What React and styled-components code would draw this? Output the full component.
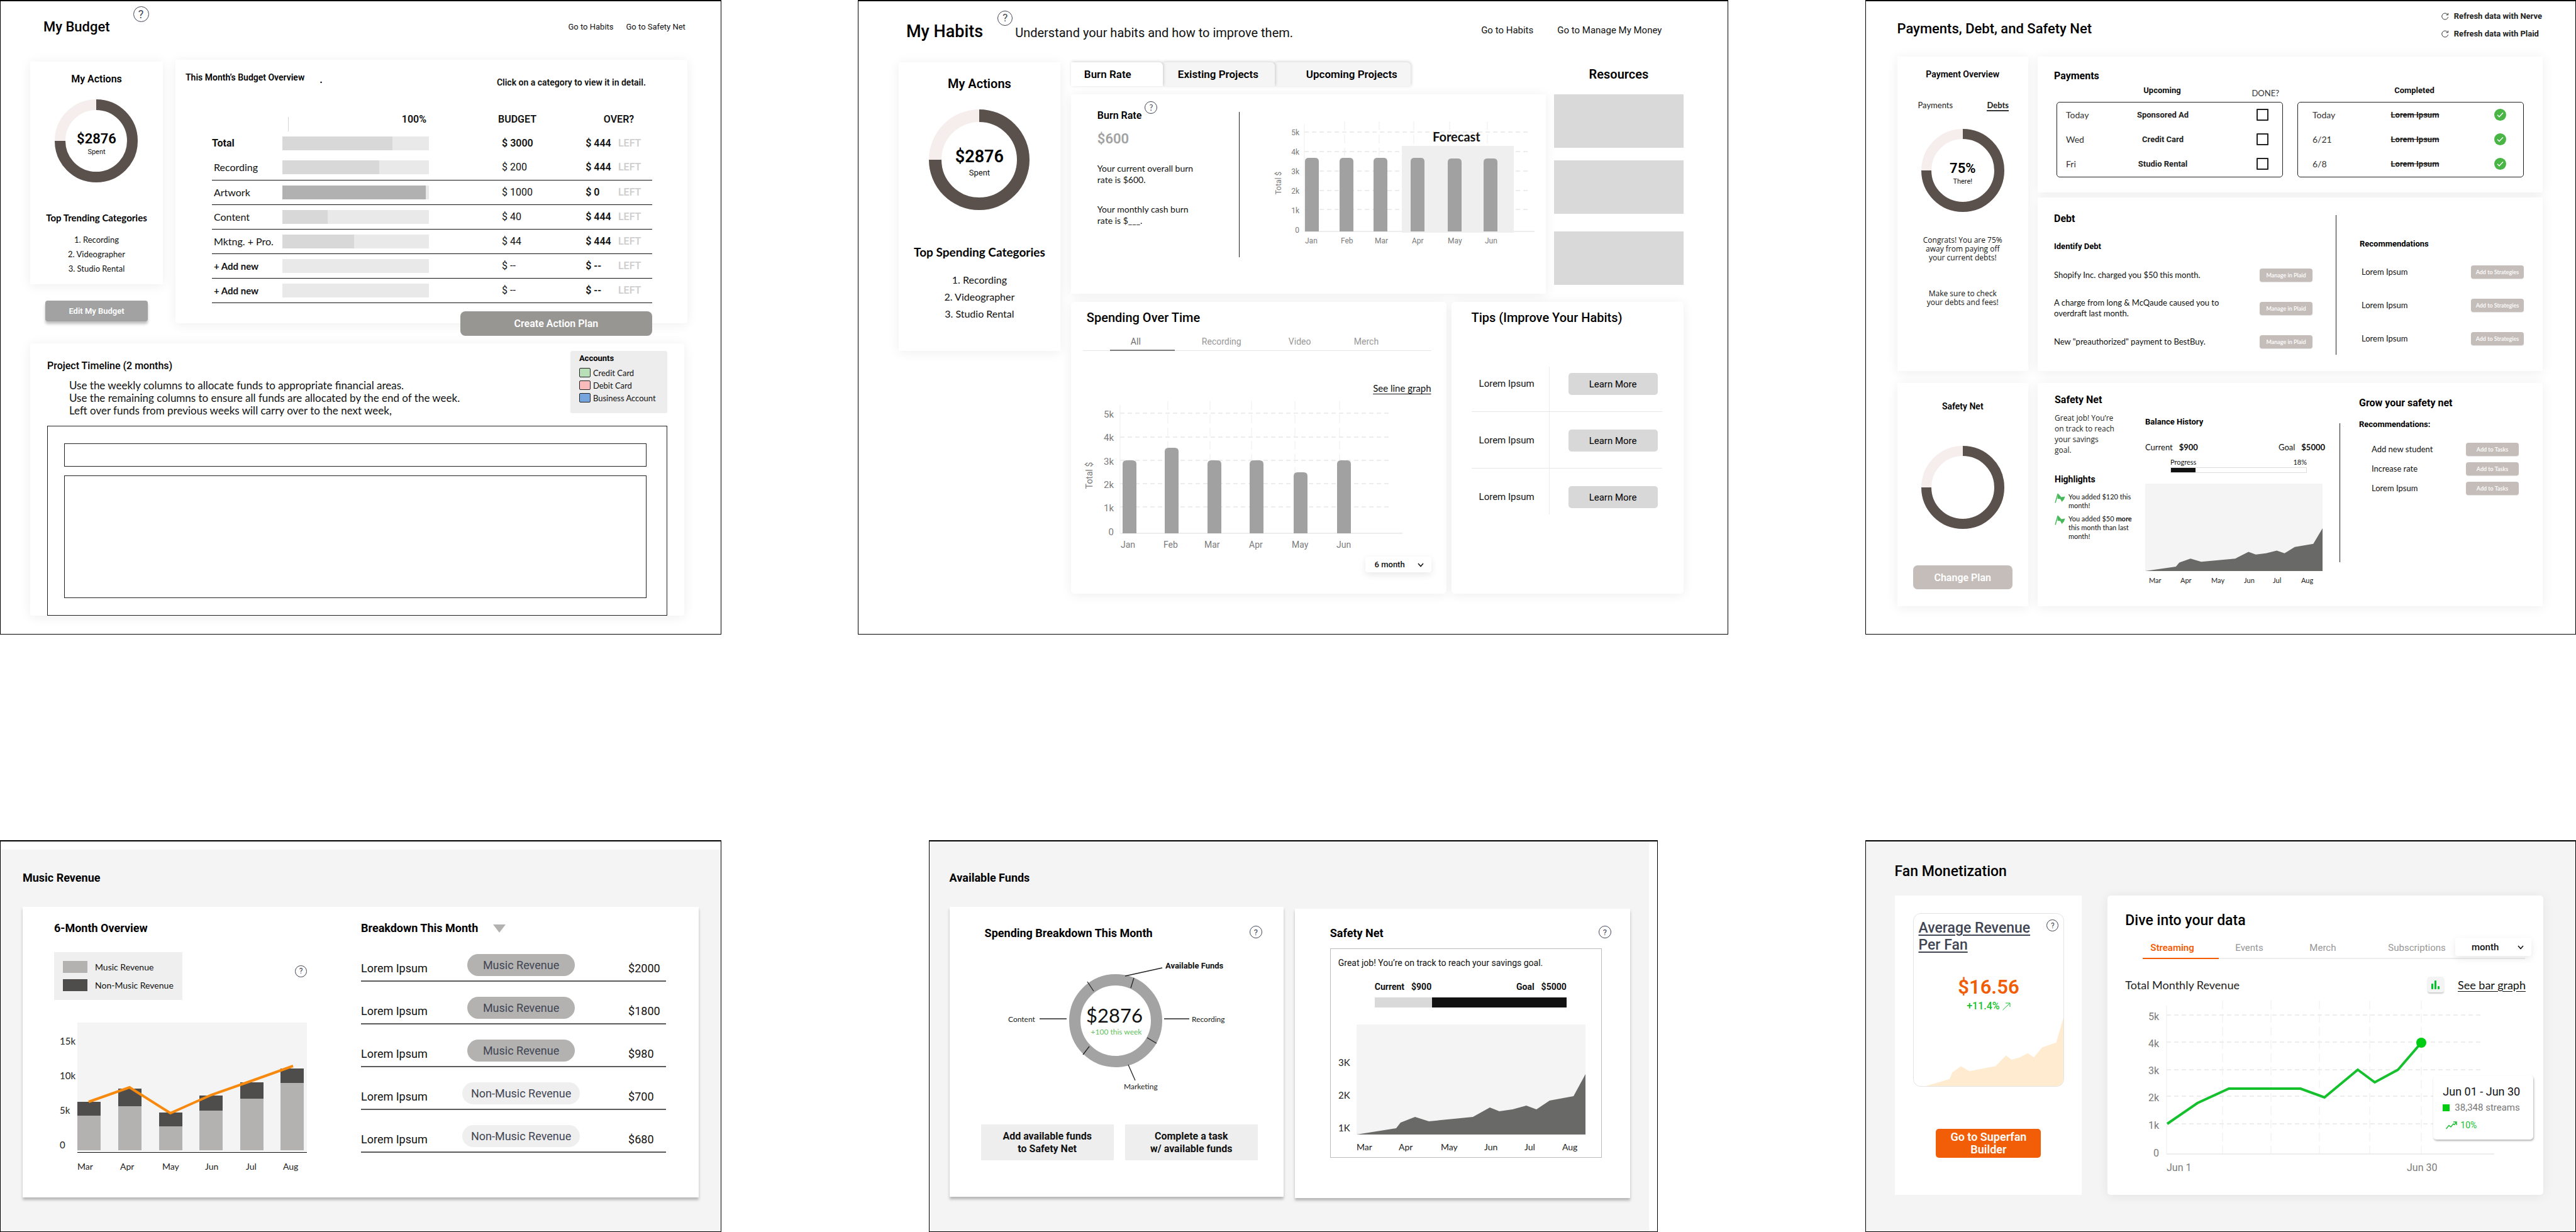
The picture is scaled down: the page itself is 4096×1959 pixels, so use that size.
import React from "react";
import styled, { createGlobalStyle, css } from "styled-components";

const roboto = '"Roboto", "Liberation Sans", sans-serif';
const lato = '"Lato", "Open Sans", sans-serif';
const openSans = '"Open Sans", "Noto Sans", sans-serif';

const GlobalStyle = createGlobalStyle`
  *, *::before, *::after { box-sizing: border-box; }
  body { margin: 0; background: #fff; color: #111; font-family: ${roboto}; }
  h1, h2, h3, h4, p, ul, ol, dl, dd { margin: 0; padding: 0; }
  ul, ol { list-style: none; }
  button, select, input { font-family: inherit; margin: 0; }
  button { cursor: pointer; padding: 0; border: 0; background: none; color: inherit; }
  svg { display: block; }
`;

/* ---------- Board ---------- */

const Board = styled.main`
  display: flex;
  flex-direction: column;
  justify-content: space-between;
  gap: 64px;
  min-height: 100vh;
`;

const BoardRow = styled.div`
  display: flex;
  justify-content: space-between;
  align-items: stretch;
`;

const Frame = styled.section`
  width: ${(p) => p.$width};
  border: 1px solid #000;
  border-top-width: 2px;
  background: ${(p) => (p.$tinted ? "#f4f4f4" : "#fff")};
`;

/* ---------- Text ---------- */

const PageTitle = styled.h1`
  font-size: ${(p) => p.$size || 22}px;
  line-height: 28px;
  font-weight: 500;
  color: #000;
  white-space: nowrap;
`;

const Heading = styled.h2`
  font-family: ${(p) => (p.$round ? lato : roboto)};
  font-size: ${(p) => p.$size || 16}px;
  line-height: ${(p) => p.$line || 20}px;
  font-weight: ${(p) => p.$weight || 500};
  color: #000;
  text-align: ${(p) => (p.$center ? "center" : "left")};
  margin-top: ${(p) => p.$top || 0}px;
  white-space: nowrap;
`;

const NavLink = styled.a`
  font-size: ${(p) => p.$size || 13}px;
  line-height: 20px;
  color: #111;
  text-decoration: none;
  white-space: nowrap;
`;

const UnderlinedLink = styled.a`
  font-family: ${lato};
  font-size: ${(p) => p.$size}px;
  line-height: 20px;
  color: #111;
  text-decoration: underline;
  text-underline-offset: 3px;
`;

const HelpButton = styled.button`
  flex: none;
  width: ${(p) => p.$size}px;
  height: ${(p) => p.$size}px;
  border: 1px solid #3f4553;
  border-radius: 50%;
  color: #3f4553;
  font-size: ${(p) => p.$size - 7}px;
  line-height: 1;
`;

const Help = ({ size = 20, className }) => (
  <HelpButton type="button" $size={size} className={className}>?</HelpButton>
);

/* ---------- Cards ---------- */

const Card = styled.article`
  background: #fff;
  border-radius: ${(p) => p.$radius || 0}px;
  box-shadow: 0 2px 18px rgba(0, 0, 0, 0.07);
`;

const RaisedCard = styled.article`
  background: #fff;
  box-shadow: 0 4px 4px rgba(0, 0, 0, 0.25);
`;

/* ---------- Donut ---------- */

const DonutBox = styled.div`
  display: grid;
  place-items: center;
  margin-top: ${(p) => p.$top}px;
  > * { grid-area: 1 / 1; }
`;

const DonutLabel = styled.div`
  padding-top: 12px;
  text-align: center;
`;

const DonutValue = styled.div`
  font-size: ${(p) => (p.$big ? 27 : 22)}px;
  line-height: ${(p) => (p.$big ? 30 : 24)}px;
  font-weight: 600;
  color: #000;
`;

const DonutCaption = styled.div`
  font-size: ${(p) => (p.$big ? 13 : 11)}px;
  line-height: ${(p) => (p.$big ? 22 : 18)}px;
`;

const Donut = ({ size, thickness, top, value, caption, big }) => {
  const r = (size - thickness) / 2;
  const ring = { cx: size / 2, cy: size / 2, r, fill: "none", strokeWidth: thickness };
  return (
    <DonutBox $top={top}>
      <svg width={size} height={size}>
        <circle {...ring} stroke="#f6eeec" />
        <circle
          {...ring}
          stroke="#5a514d"
          pathLength="100"
          strokeDasharray="75 25"
          transform={`rotate(-90 ${size / 2} ${size / 2})`}
        />
      </svg>
      {value && (
        <DonutLabel>
          <DonutValue $big={big}>{value}</DonutValue>
          <DonutCaption $big={big}>{caption}</DonutCaption>
        </DonutLabel>
      )}
    </DonutBox>
  );
};

const RankedList = styled.ol`
  margin-top: ${(p) => p.$top}px;
  font-family: ${lato};
  font-size: ${(p) => p.$size}px;
  line-height: ${(p) => p.$line}px;
  text-align: center;
`;

/* ---------- Chart pieces ---------- */

const ChartText = styled.text`
  font-family: ${(p) => (p.$round ? lato : roboto)};
  font-size: ${(p) => p.$size}px;
  font-weight: ${(p) => p.$weight || 400};
  fill: ${(p) => p.$color || "#7b7b7b"};
  dominant-baseline: central;
`;

const AREA =
  "0,96 63,86 70,77 93,68 115,75 185,68 212,53 227,59 248,56 270,50 286,56 307,42 345,35 364,0 364,96";

const Area = ({ x = 0, y = 0, width, height, fill }) => (
  <svg x={x} y={y} width={width} height={height} viewBox="0 0 364 96" preserveAspectRatio="none">
    <polygon points={AREA} fill={fill} />
  </svg>
);

const PlotGrid = ({ plot }) => (
  <g stroke="#ededed">
    {plot.rows.map((y) => (
      <line key={y} x1={plot.left} x2={plot.gridRight} y1={y} y2={y} strokeWidth="2" strokeDasharray="7 5" />
    ))}
    {plot.columns.map((x) => (
      <line key={x} x1={x} x2={x} y1={plot.columnTop} y2={plot.base} strokeDasharray="14 7" />
    ))}
    <line x1={plot.left} x2={plot.left} y1={plot.top} y2={plot.base} />
    <line x1={plot.left} x2={plot.right} y1={plot.base} y2={plot.base} strokeWidth="2" />
  </g>
);

const PlotScale = ({ plot }) =>
  ["5k", "4k", "3k", "2k", "1k", "0"].map((label, i) => (
    <ChartText key={label} x={plot.labelRight} y={plot.labels[i]} textAnchor="end" $size={plot.scaleSize}>
      {label}
    </ChartText>
  ));

const BarChart = ({ plot, children }) => (
  <svg width={plot.width} height={plot.height}>
    <PlotGrid plot={plot} />
    {children}
    <PlotScale plot={plot} />
    <ChartText
      x="0"
      y="0"
      textAnchor="middle"
      $size={plot.monthSize}
      transform={`translate(${plot.titleX} ${plot.titleY}) rotate(-90)`}
    >
      Total $
    </ChartText>
    {plot.bars.map((bar) => (
      <g key={bar.month}>
        <path
          fill="#a1a1a1"
          d={`M${bar.x} ${plot.base} V${bar.top + 6} q0 -6 6 -6 h10 q6 0 6 6 V${plot.base} z`}
        />
        <ChartText x={bar.labelX} y={plot.monthY} $size={plot.monthSize}>
          {bar.month}
        </ChartText>
      </g>
    ))}
  </svg>
);

/* ---------- Buttons, selects ---------- */

const SoftButton = styled.button`
  width: ${(p) => p.$width}px;
  height: 21px;
  border-radius: 4px;
  background: #c5bdb9;
  color: #fff;
  font-size: 9px;
  font-weight: 600;
  box-shadow: 0 1px 1px rgba(0, 0, 0, 0.12);
`;

const SelectBox = styled.div`
  position: relative;
  width: ${(p) => p.$width}px;
  height: ${(p) => p.$height}px;
  svg { position: absolute; right: 12px; top: 50%; margin-top: -3px; pointer-events: none; }
`;

const SelectField = styled.select`
  appearance: none;
  width: 100%;
  height: 100%;
  border: 0;
  border-radius: 4px;
  padding: 0 0 0 ${(p) => p.$indent}px;
  background: #fff;
  color: #111;
  font-size: ${(p) => p.$size}px;
  font-weight: 500;
  box-shadow: 0 4px 12px rgba(0, 0, 0, 0.09);
`;

const Select = ({ label, width, height, size, indent }) => (
  <SelectBox $width={width} $height={height}>
    <SelectField aria-label="Period" $size={size} $indent={indent}>
      <option>{label}</option>
    </SelectField>
    <svg width="10" height="7" viewBox="0 0 10 7" fill="none" stroke="#111" strokeWidth="1.5">
      <path d="M1 1 L5 5.5 L9 1" />
    </svg>
  </SelectBox>
);

/* ---------- My Budget ---------- */

const BudgetHeader = styled.header`
  display: flex;
  align-items: center;
  height: 82px;
  padding: 0 56px 0 68px;
  ${HelpButton} { align-self: flex-start; margin: 8px auto 0 37px; }
  nav { display: flex; gap: 20px; }
`;

const BudgetBody = styled.div`
  display: grid;
  grid-template-columns: 211fr 814fr;
  column-gap: 20px;
  padding: 11px 53px 29px 47px;
`;

const BudgetSide = styled.div`
  display: flex;
  flex-direction: column;
  align-items: center;
  padding-top: 3px;
`;

const ActionsCard = styled(Card)`
  width: 100%;
  padding: 18px 0 13px;
`;

const EditButton = styled.button`
  width: 163px;
  height: 33px;
  margin-top: 26px;
  border-radius: 4px;
  background: #a2a2a2;
  color: #fff;
  font-size: 13px;
  font-weight: 600;
  box-shadow: 0 4px 4px rgba(0, 0, 0, 0.25);
`;

const OverviewCard = styled(Card)`
  position: relative;
  padding: 18px 0 32px;
`;

const OverviewTop = styled.div`
  display: flex;
  height: 28px;
  padding: 0 66px 0 16px;
`;

const OverviewHint = styled.p`
  align-self: flex-end;
  margin-left: auto;
  font-size: 14px;
  line-height: 20px;
  font-weight: 600;
`;

const OverviewDot = styled.span`
  align-self: center;
  margin-left: 24px;
  font-weight: 700;
  line-height: 20px;
`;

const BudgetTable = styled.table`
  width: calc(100% - 114px);
  margin: 30px 56px 0 58px;
  table-layout: fixed;
  border-collapse: collapse;
  font-size: 16px;
  line-height: 20px;
  th, td { padding: 0; text-align: left; font-weight: 400; white-space: nowrap; }
  thead tr, tbody tr:first-child { height: 38px; }
  thead th { font-weight: 600; }
  tbody tr { height: 39px; }
  tbody tr + tr { border-bottom: 1px solid #111; }
  thead th:nth-child(3) { padding-left: 110px; }
  thead th:last-child { text-align: center; }
`;

const CategoryCell = styled.th`
  && {
    padding-left: ${(p) => (p.$kind === "total" ? 0 : 3)}px;
    font-family: ${(p) => (p.$kind === "total" ? roboto : lato)};
    font-size: ${(p) => (p.$kind === "new" ? 15 : 16)}px;
    font-weight: ${(p) => (p.$kind ? 700 : 400)};
  }
`;

const PlannedCell = styled.td`
  && { padding-left: 116px; font-weight: ${(p) => (p.$strong ? 600 : 400)}; }
`;

const OverCell = styled.td`
  && { font-weight: 600; }
`;

const LeftCell = styled.td`
  && { font-weight: 600; color: #d0cfcf; }
`;

const ScaleHead = styled.div`
  display: flex;
  justify-content: space-between;
  height: 38px;
  padding: 0 4px 0 9px;
  line-height: 38px;
  &::before { content: ""; align-self: flex-end; width: 1px; height: 23px; background: #d4d4d4; }
`;

const Meter = styled.div`
  height: 22px;
  background: #e9e9e9;
`;

const MeterFill = styled.div`
  height: 100%;
  background: ${(p) => (p.$full ? "#b1b1b1" : "#d8d8d8")};
`;

const PlanButton = styled.button`
  position: absolute;
  right: 56px;
  bottom: -20px;
  width: 305px;
  height: 39px;
  border-radius: 8px;
  background: #989693;
  color: #fff;
  font-size: 16px;
  font-weight: 600;
`;

const TimelineCard = styled(Card)`
  grid-column: 1 / -1;
  margin: 32px 5px 0 0;
  padding: 12px 27px 0;
`;

const TimelineTop = styled.div`
  display: flex;
  justify-content: space-between;
`;

const TimelineCopy = styled.div`
  margin: 11px 0 0 35px;
  font-family: ${lato};
  font-size: 17px;
  line-height: 20px;
`;

const AccountsLegend = styled.div`
  width: 154px;
  height: 99px;
  padding: 4px 0 0 14px;
  border-radius: 3px;
  background: #ededed;
`;

const LegendList = styled.ul`
  margin-top: 5px;
  font-family: ${lato};
  font-size: 13px;
  line-height: 20px;
  li { display: flex; align-items: center; gap: 4px; }
`;

const AccountSwatch = styled.span`
  width: 18px;
  height: 15px;
  border: 1px solid #222;
  border-radius: 2px;
  background: ${(p) => p.$color};
`;

const TimelineBox = styled.div`
  display: flex;
  flex-direction: column;
  gap: 14px;
  margin-top: 14px;
  padding: 27px 32px 27px 26px;
  border: 1px solid #222;
`;

const TimelineLane = styled.div`
  height: ${(p) => p.$height}px;
  border: 1px solid #222;
`;

const budgetRows = [
  { name: "Total", kind: "total", fill: 75, planned: "$ 3000", over: "$ 444" },
  { name: "Recording", fill: 66, planned: "$ 200", over: "$ 444" },
  { name: "Artwork", fill: 98, full: true, planned: "$ 1000", over: "$ 0" },
  { name: "Content", fill: 31, planned: "$ 40", over: "$ 444" },
  { name: "Mktng. + Pro.", fill: 49, planned: "$ 44", over: "$ 444" },
  { name: "+ Add new", kind: "new", fill: 0, planned: "$ --", over: "$ --" },
  { name: "+ Add new", kind: "new", fill: 0, planned: "$ --", over: "$ --" },
];

const MyBudget = () => (
  <Frame $width="28%">
    <BudgetHeader>
      <PageTitle>My Budget</PageTitle>
      <Help size={25} />
      <nav>
        <NavLink href="#habits">Go to Habits</NavLink>
        <NavLink href="#safety-net">Go to Safety Net</NavLink>
      </nav>
    </BudgetHeader>
    <BudgetBody>
      <BudgetSide>
        <ActionsCard>
          <Heading $center $weight={600}>My Actions</Heading>
          <Donut size={132} thickness={17} top={22} value="$2876" caption="Spent" />
          <Heading as="h3" $round $center $size={15} $weight={700} $top={46}>Top Trending Categories</Heading>
          <RankedList $top={14} $size={13} $line={23}>
            <li>1. Recording</li>
            <li>2. Videographer</li>
            <li>3. Studio Rental</li>
          </RankedList>
        </ActionsCard>
        <EditButton type="button">Edit My Budget</EditButton>
      </BudgetSide>
      <OverviewCard $radius={4}>
        <OverviewTop>
          <Heading $size={14} $weight={600}>This Month’s Budget Overview</Heading>
          <OverviewDot>.</OverviewDot>
          <OverviewHint>Click on a category to view it in detail.</OverviewHint>
        </OverviewTop>
        <BudgetTable>
          <colgroup>
            <col style={{ width: "16%" }} />
            <col style={{ width: "33.3%" }} />
            <col style={{ width: "35.6%" }} />
            <col style={{ width: "7.4%" }} />
            <col style={{ width: "7.7%" }} />
          </colgroup>
          <thead>
            <tr>
              <th />
              <th><ScaleHead>100%</ScaleHead></th>
              <th>BUDGET</th>
              <th colSpan="2">OVER?</th>
            </tr>
          </thead>
          <tbody>
            {budgetRows.map((row, i) => (
              <tr key={i}>
                <CategoryCell $kind={row.kind}>{row.name}</CategoryCell>
                <td><Meter><MeterFill $full={row.full} style={{ width: `${row.fill}%` }} /></Meter></td>
                <PlannedCell $strong={row.kind === "total"}>{row.planned}</PlannedCell>
                <OverCell>{row.over}</OverCell>
                <LeftCell>LEFT</LeftCell>
              </tr>
            ))}
          </tbody>
        </BudgetTable>
        <PlanButton type="button">Create Action Plan</PlanButton>
      </OverviewCard>
      <TimelineCard $radius={4}>
        <TimelineTop>
          <div>
            <Heading $top={14}>Project Timeline (2 months)</Heading>
            <TimelineCopy>
              <p>Use the weekly columns to allocate funds to appropriate financial areas.</p>
              <p>Use the remaining columns to ensure all funds are allocated by the end of the week.</p>
              <p>Left over funds from previous weeks will carry over to the next week,</p>
            </TimelineCopy>
          </div>
          <AccountsLegend>
            <Heading as="h3" $size={13} $line={16} $weight={700}>Accounts</Heading>
            <LegendList>
              <li><AccountSwatch $color="#b9dfb9" />Credit Card</li>
              <li><AccountSwatch $color="#f9bcbc" />Debit Card</li>
              <li><AccountSwatch $color="#76a5dd" />Business Account</li>
            </LegendList>
          </AccountsLegend>
        </TimelineTop>
        <TimelineBox>
          <TimelineLane $height={37} />
          <TimelineLane $height={195} />
        </TimelineBox>
      </TimelineCard>
    </BudgetBody>
  </Frame>
);

/* ---------- My Habits ---------- */

const HabitsHeader = styled.header`
  display: flex;
  align-items: center;
  justify-content: space-between;
  height: 97px;
  padding: 0 105px 0 76px;
  nav { display: flex; gap: 38px; padding-bottom: 6px; }
`;

const HabitsTitle = styled.div`
  display: flex;
  align-items: baseline;
  p { font-size: 20px; line-height: 28px; margin-left: 4px; }
  ${HelpButton} { align-self: flex-start; margin: -19px 0 0 23px; }
`;

const HabitsBody = styled.div`
  display: grid;
  grid-template-columns: 257fr 975fr;
  column-gap: 17px;
  align-items: start;
  padding: 0 70px 63px 64px;
`;

const HabitsActions = styled(Card)`
  padding: 22px 0 46px;
`;

const HabitsMain = styled.div`
  display: grid;
  gap: 13px;
`;

const BurnRow = styled.div`
  display: grid;
  grid-template-columns: 755fr 207fr;
  column-gap: 13px;
`;

const ProjectTabs = styled.div`
  display: flex;
  height: 38px;
  margin-bottom: 13px;
`;

const ProjectTab = styled.button`
  position: relative;
  z-index: ${(p) => p.$layer};
  width: ${(p) => p.$width}px;
  padding-left: ${(p) => p.$indent}px;
  border-radius: 0 6px 0 0;
  background: ${(p) => (p.$active ? "#fff" : "#f5f5f5")};
  box-shadow: 1px -1px 5px rgba(0, 0, 0, 0.18);
  font-size: 17px;
  font-weight: 600;
  color: #000;
  text-align: left;
  white-space: nowrap;
`;

const BurnCard = styled(Card)`
  display: flex;
  padding: 11px 0 58px 42px;
`;

const BurnCopy = styled.div`
  width: 225px;
  font-family: ${lato};
  font-size: 14px;
  line-height: 18px;
  p { max-width: 170px; }
  p + p { margin-top: 29px; }
`;

const BurnTitle = styled.div`
  display: flex;
  gap: 5px;
  height: 33px;
  ${Heading} { align-self: flex-end; }
`;

const BurnValue = styled.div`
  margin: 14px 0 25px;
  font-family: ${roboto};
  font-size: 22px;
  line-height: 26px;
  font-weight: 600;
  color: #a2a2a2;
`;

const Divider = styled.div`
  flex: none;
  width: 1px;
  height: ${(p) => p.$height}px;
  margin: ${(p) => p.$top}px 0 0 ${(p) => p.$left || 0}px;
  background: #222;
`;

const BurnChart = styled.div`
  margin: 19px 0 0 49px;
`;

const Resources = styled.div`
  display: grid;
  align-content: start;
  row-gap: 20px;
  ${Heading} { margin-bottom: -7px; }
`;

const ResourceTile = styled.div`
  height: 85px;
  background: #d9d9d9;
  &:last-child { margin-top: 8px; }
`;

const SpendingRow = styled.div`
  display: grid;
  grid-template-columns: 597fr 370fr;
  column-gap: 8px;
`;

const SpendingCard = styled(Card)`
  display: flex;
  flex-direction: column;
  align-items: flex-end;
  padding: 13px 24px 34px 19px;
  > ${Heading} { align-self: flex-start; padding-left: 6px; }
  > ${UnderlinedLink} { margin-top: 49px; }
  > svg { align-self: flex-start; margin: 9px 0 7px; }
`;

const FilterTabs = styled.div`
  display: flex;
  align-self: stretch;
  height: 28px;
  margin-top: 13px;
  padding-left: 43px;
  border-bottom: 1px solid #e6e6e6;
`;

const FilterTab = styled.button`
  width: ${(p) => p.$width}px;
  height: 28px;
  padding-left: ${(p) => (p.$active ? 33 : 43)}px;
  border-bottom: 2px solid ${(p) => (p.$active ? "#7c7c7c" : "transparent")};
  color: ${(p) => (p.$active ? "#6d6d6d" : "#979797")};
  font-size: 14px;
  text-align: left;
`;

const TipsCard = styled(Card)`
  padding: 13px 34px 0 32px;
`;

const TipsList = styled.ul`
  margin-top: 66px;
  li { display: grid; grid-template-columns: 123px 1fr; }
  li + li { border-top: 1px solid #e6e6e6; }
`;

const TipText = styled.span`
  padding: 28px 0 26px 12px;
  font-size: 15px;
  line-height: 35px;
  li:first-child & { padding-top: 10px; }
  li:last-child & { padding-bottom: 10px; }
`;

const TipAction = styled.span`
  padding: 28px 0 26px 30px;
  border-left: 1px solid #ececec;
  li:first-child & { padding-top: 10px; }
  li:last-child & { padding-bottom: 10px; }
`;

const LearnButton = styled.button`
  display: block;
  width: 142px;
  height: 35px;
  border-radius: 5px;
  background: #d8d8d8;
  font-size: 15px;
  color: #000;
`;

const burnPlot = {
  width: 430, height: 220, left: 54, top: 18, base: 188, right: 420, gridRight: 414,
  rows: [30, 61, 92, 123, 153], columns: [118, 173, 228, 285, 345], columnTop: 13,
  labels: [31, 62, 93, 124, 155, 186], labelRight: 46, scaleSize: 12,
  monthY: 203, monthSize: 12, titleX: 13, titleY: 111,
  bars: [
    { month: "Jan", x: 55, top: 71, labelX: 55 },
    { month: "Feb", x: 110, top: 71, labelX: 112 },
    { month: "Mar", x: 164, top: 71, labelX: 166 },
    { month: "Apr", x: 223, top: 71, labelX: 225 },
    { month: "May", x: 282, top: 72, labelX: 282 },
    { month: "Jun", x: 339, top: 72, labelX: 341 },
  ],
};

const spendingPlot = {
  width: 520, height: 242, left: 59, top: 8, base: 212, right: 508, gridRight: 491,
  rows: [21, 59, 96, 133, 170], columns: [135, 202, 268, 337, 408], columnTop: 2,
  labels: [23, 60, 98, 135, 172, 210], labelRight: 49, scaleSize: 15,
  monthY: 230, monthSize: 14, titleX: 10, titleY: 120,
  bars: [
    { month: "Jan", x: 63, top: 96, labelX: 60 },
    { month: "Feb", x: 130, top: 76, labelX: 128 },
    { month: "Mar", x: 198, top: 96, labelX: 193 },
    { month: "Apr", x: 265, top: 96, labelX: 264 },
    { month: "May", x: 335, top: 115, labelX: 332 },
    { month: "Jun", x: 404, top: 96, labelX: 403 },
  ],
};

const MyHabits = () => (
  <Frame $width="33.8%">
    <HabitsHeader>
      <HabitsTitle>
        <PageTitle $size={27}>My Habits</PageTitle>
        <Help size={24} />
        <p>Understand your habits and how to improve them.</p>
      </HabitsTitle>
      <nav>
        <NavLink $size={15} href="#habits">Go to Habits</NavLink>
        <NavLink $size={15} href="#money">Go to Manage My Money</NavLink>
      </nav>
    </HabitsHeader>
    <HabitsBody>
      <HabitsActions>
        <Heading $center $size={20} $line={24} $weight={600}>My Actions</Heading>
        <Donut size={160} thickness={20} top={29} value="$2876" caption="Spent" big />
        <Heading as="h3" $round $center $size={19} $line={24} $weight={700} $top={55}>Top Spending Categories</Heading>
        <RankedList $top={18} $size={16} $line={27}>
          <li>1. Recording</li>
          <li>2. Videographer</li>
          <li>3. Studio Rental</li>
        </RankedList>
      </HabitsActions>
      <HabitsMain>
        <BurnRow>
          <div>
            <ProjectTabs>
              <ProjectTab type="button" $active $layer={3} $width={146} $indent={21}>Burn Rate</ProjectTab>
              <ProjectTab type="button" $layer={2} $width={178} $indent={24}>Existing Projects</ProjectTab>
              <ProjectTab type="button" $layer={1} $width={216} $indent={50}>Upcoming Projects</ProjectTab>
            </ProjectTabs>
            <BurnCard>
              <BurnCopy>
                <BurnTitle>
                  <Heading $weight={600}>Burn Rate</Heading>
                  <Help size={20} />
                </BurnTitle>
                <BurnValue>$600</BurnValue>
                <p>Your current overall burn rate is $600.</p>
                <p>Your monthly cash burn rate is $___.</p>
              </BurnCopy>
              <Divider $height={231} $top={17} />
              <BurnChart>
                <BarChart plot={burnPlot}>
                  <rect x="209" y="52" width="178" height="138" fill="#efefef" />
                  <ChartText x="258" y="37" $round $size={20} $weight={700} $color="#111">Forecast</ChartText>
                </BarChart>
              </BurnChart>
            </BurnCard>
          </div>
          <Resources>
            <Heading $center $size={20} $line={38} $weight={600}>Resources</Heading>
            <ResourceTile />
            <ResourceTile />
            <ResourceTile />
          </Resources>
        </BurnRow>
        <SpendingRow>
          <SpendingCard $radius={5}>
            <Heading $size={20} $line={24}>Spending Over Time</Heading>
            <FilterTabs>
              <FilterTab type="button" $active $width={103}>All</FilterTab>
              <FilterTab type="button" $width={138}>Recording</FilterTab>
              <FilterTab type="button" $width={104}>Video</FilterTab>
              <FilterTab type="button" $width={104}>Merch</FilterTab>
            </FilterTabs>
            <UnderlinedLink $size={15} href="#line-graph">See line graph</UnderlinedLink>
            <BarChart plot={spendingPlot} />
            <Select label="6 month" width={105} height={25} size={13} indent={15} />
          </SpendingCard>
          <TipsCard $radius={5}>
            <Heading $size={20} $line={24}>Tips (Improve Your Habits)</Heading>
            <TipsList>
              {[1, 2, 3].map((n) => (
                <li key={n}>
                  <TipText>Lorem Ipsum</TipText>
                  <TipAction><LearnButton type="button">Learn More</LearnButton></TipAction>
                </li>
              ))}
            </TipsList>
          </TipsCard>
        </SpendingRow>
      </HabitsMain>
    </HabitsBody>
  </Frame>
);

/* ---------- Payments, Debt, and Safety Net ---------- */

const PaymentsHeader = styled.header`
  display: flex;
  align-items: center;
  justify-content: space-between;
  height: 88px;
  padding: 0 53px 0 50px;
`;

const RefreshList = styled.div`
  align-self: flex-start;
  padding-top: 10px;
`;

const RefreshButton = styled.button`
  display: flex;
  align-items: center;
  gap: 8px;
  font-size: 13px;
  line-height: 28px;
  font-weight: 700;
  color: #222;
`;

const RefreshIcon = () => (
  <svg width="12" height="12" viewBox="0 0 12 12" fill="none" stroke="#333" strokeWidth="1">
    <path d="M10.6 7.2 A5 5 0 1 1 9.4 2.6 L10.4 3.6" />
    <path d="M10.6 0.8 V3.8 H7.6" />
  </svg>
);

const PaymentsBody = styled.div`
  display: grid;
  grid-template-columns: 208fr 801fr;
  gap: 19px 15px;
  padding: 0 52px 43px 50px;
`;

const PaymentOverview = styled(Card)`
  padding: 18px 0 102px;
`;

const OverviewTabs = styled.div`
  display: flex;
  justify-content: space-between;
  margin-top: 31px;
  padding: 0 31px 0 33px;
`;

const OverviewTab = styled.button`
  height: 18px;
  border-bottom: 2px solid ${(p) => (p.$active ? "#333" : "transparent")};
  font-family: ${lato};
  font-size: 13px;
  line-height: 16px;
  font-weight: ${(p) => (p.$active ? 700 : 400)};
  color: #222;
`;

const OverviewNote = styled.p`
  width: 132px;
  margin: ${(p) => p.$top}px auto 0;
  font-family: ${openSans};
  font-size: 12px;
  line-height: 14px;
  text-align: center;
`;

const MainStack = styled.div`
  display: grid;
  row-gap: 8px;
`;

const PaymentsCard = styled(Card)`
  padding: 21px 30px 22px;
  > ${Heading} { margin-left: -4px; }
`;

const PaymentsColumns = styled.div`
  display: grid;
  grid-template-columns: 1fr 1fr;
  column-gap: 23px;
`;

const columnTemplate = css`
  display: grid;
  grid-template-columns: ${(p) => 84 + p.$shift}px 168px 1fr;
  align-items: center;
`;

const ColumnHead = styled.div`
  ${columnTemplate}
  height: 31px;
  padding-bottom: 6px;
  font-size: 13px;
  line-height: 16px;
  font-weight: 700;
  text-align: center;
  > :first-child { grid-column: 2; }
`;

const DoneLabel = styled.span`
  align-self: end;
  justify-self: end;
  padding-right: 6px;
  font-family: ${lato};
  font-weight: 400;
  color: #333;
`;

const PaymentList = styled.ul`
  height: 120px;
  border: 1px solid #222;
  border-radius: 5px;
`;

const PaymentItem = styled.li`
  ${columnTemplate}
  height: 39px;
  font-size: 13px;
`;

const PaymentDay = styled.span`
  padding-left: ${(p) => 14 + p.$inset}px;
  font-family: ${lato};
  font-size: 14px;
  color: #333;
`;

const PaymentName = styled.label`
  font-weight: 700;
  text-align: center;
  text-decoration: ${(p) => (p.$struck ? "line-through" : "none")};
  color: #222;
`;

const CheckBox = styled.input`
  appearance: none;
  justify-self: end;
  width: 19px;
  height: 19px;
  margin-right: 22px;
  border: 2px solid #222;
  border-radius: 1px;
`;

const CheckMark = styled.svg`
  justify-self: end;
  margin-right: 27px;
`;

const DebtCard = styled(Card)`
  display: flex;
`;

const DebtColumn = styled.div`
  width: 474px;
  padding: 24px 37px 19px 26px;
`;

const AdviceColumn = styled.div`
  flex: 1;
  padding: ${(p) => p.$top}px ${(p) => p.$right}px 0 ${(p) => p.$left}px;
`;

const ActionRows = styled.ul`
  margin-top: ${(p) => p.$top}px;
  padding-left: ${(p) => p.$indent || 0}px;
  font-family: ${lato};
  font-size: 13px;
  line-height: 17px;
  li { display: flex; align-items: center; justify-content: space-between; height: ${(p) => p.$row}px; }
  span { max-width: 275px; }
`;

const SafetyPlanCard = styled(Card)`
  display: flex;
  flex-direction: column;
  align-items: center;
  padding: 27px 0;
`;

const ChangeButton = styled.button`
  width: 158px;
  height: 38px;
  margin-top: 58px;
  border-radius: 7px;
  background: #c5bdb9;
  color: #fff;
  font-size: 16px;
  font-weight: 600;
`;

const SafetyCard = styled(Card)`
  display: flex;
`;

const SafetyCopy = styled.div`
  width: 171px;
  padding: 17px 0 0 27px;
`;

const SafetyNote = styled.p`
  width: 98px;
  margin-top: 10px;
  font-family: ${openSans};
  font-size: 12px;
  line-height: 17px;
  color: #222;
`;

const HighlightList = styled.ul`
  display: grid;
  row-gap: 7px;
  margin-top: 11px;
  font-family: ${lato};
  font-size: 11px;
  line-height: 14px;
  li { display: flex; gap: 5px; }
  p { width: 108px; }
  svg { flex: none; margin-top: 1px; }
`;

const Flag = () => (
  <svg width="17" height="16" viewBox="0 0 17 16">
    <path d="M5.5 0.5 L10.5 6.5 L16.5 5.5 L15 10 L11.5 14 L9 9.5 L4.5 9 z" fill="#48b95a" />
    <path d="M5.2 1 L1 15.5" stroke="#48b95a" strokeWidth="1.5" />
  </svg>
);

const BalancePanel = styled.div`
  width: 286px;
  padding-top: 54px;
`;

const AmountRow = styled.div`
  display: flex;
  justify-content: space-between;
  margin-top: ${(p) => p.$top}px;
  font-family: ${(p) => (p.$round ? lato : roboto)};
  font-size: ${(p) => p.$size}px;
  line-height: 16px;
  font-weight: ${(p) => p.$weight || 400};
  b { margin-left: ${(p) => p.$gap}px; font-weight: ${(p) => p.$weight || 700}; }
`;

const ProgressLabels = styled.div`
  display: flex;
  justify-content: space-between;
  margin: 9px 29px 1px 40px;
  font-family: ${lato};
  font-size: 11px;
  line-height: 14px;
`;

const ProgressTrack = styled.div`
  height: 9px;
  margin: 0 29px 17px 40px;
  border: 1px solid #ddd;
`;

const ProgressFill = styled.div`
  height: 7px;
  background: #111;
`;

const MonthLabels = ({ xs, y, size, color }) =>
  ["Mar", "Apr", "May", "Jun", "Jul", "Aug"].map((month, i) => (
    <ChartText key={month} x={xs[i]} y={y} $round $size={size} $color={color}>{month}</ChartText>
  ));

const Payments = () => (
  <Frame $width="27.6%">
    <PaymentsHeader>
      <PageTitle>Payments, Debt, and Safety Net</PageTitle>
      <RefreshList>
        <RefreshButton type="button"><RefreshIcon />Refresh data with Nerve</RefreshButton>
        <RefreshButton type="button"><RefreshIcon />Refresh data with Plaid</RefreshButton>
      </RefreshList>
    </PaymentsHeader>
    <PaymentsBody>
      <PaymentOverview>
        <Heading $center $size={14} $weight={600}>Payment Overview</Heading>
        <OverviewTabs>
          <OverviewTab type="button">Payments</OverviewTab>
          <OverviewTab type="button" $active>Debts</OverviewTab>
        </OverviewTabs>
        <Donut size={132} thickness={16} top={28} value="75%" caption="There!" />
        <OverviewNote $top={38}>Congrats! You are 75% away from paying off your current debts!</OverviewNote>
        <OverviewNote $top={43}>Make sure to check your debts and fees!</OverviewNote>
      </PaymentOverview>
      <MainStack>
        <PaymentsCard>
          <Heading $weight={700}>Payments</Heading>
          <PaymentsColumns>
            <div>
              <ColumnHead $shift={0}><span>Upcoming</span><DoneLabel>DONE?</DoneLabel></ColumnHead>
              <PaymentList>
                {[["Today", "Sponsored Ad"], ["Wed", "Credit Card"], ["Fri", "Studio Rental"]].map(([day, name]) => (
                  <PaymentItem key={day} $shift={0}>
                    <PaymentDay $inset={0}>{day}</PaymentDay>
                    <PaymentName htmlFor={`pay-${day}`}>{name}</PaymentName>
                    <CheckBox type="checkbox" id={`pay-${day}`} />
                  </PaymentItem>
                ))}
              </PaymentList>
            </div>
            <div>
              <ColumnHead $shift={18}><span>Completed</span></ColumnHead>
              <PaymentList>
                {["Today", "6/21", "6/8"].map((day) => (
                  <PaymentItem key={day} $shift={18}>
                    <PaymentDay $inset={9}>{day}</PaymentDay>
                    <PaymentName as="span" $struck>Lorem Ipsum</PaymentName>
                    <CheckMark width="19" height="19" viewBox="0 0 19 19">
                      <circle cx="9.5" cy="9.5" r="9.5" fill="#48b545" />
                      <path d="M5 9.8 L8 12.8 L14 6.2" fill="none" stroke="#fff" strokeWidth="1.4" />
                    </CheckMark>
                  </PaymentItem>
                ))}
              </PaymentList>
            </div>
          </PaymentsColumns>
        </PaymentsCard>
        <DebtCard>
          <DebtColumn>
            <Heading $weight={700}>Debt</Heading>
            <Heading as="h3" $size={13} $line={16} $weight={700} $top={26}>Identify Debt</Heading>
            <ActionRows $top={11} $row={53}>
              {[
                "Shopify Inc. charged you $50 this month.",
                "A charge from long & McQaude caused you to overdraft last month.",
                'New "preauthorized" payment to BestBuy.',
              ].map((text) => (
                <li key={text}>
                  <span>{text}</span>
                  <SoftButton type="button" $width={84}>Manage in Plaid</SoftButton>
                </li>
              ))}
            </ActionRows>
          </DebtColumn>
          <Divider $height={222} $top={28} />
          <AdviceColumn $top={66} $right={30} $left={37}>
            <Heading as="h3" $size={13} $line={16} $weight={700}>Recommendations</Heading>
            <ActionRows $top={10} $row={53} $indent={3}>
              {[1, 2, 3].map((n) => (
                <li key={n}>
                  <span>Lorem Ipsum</span>
                  <SoftButton type="button" $width={84}>Add to Strategies</SoftButton>
                </li>
              ))}
            </ActionRows>
          </AdviceColumn>
        </DebtCard>
      </MainStack>
      <SafetyPlanCard>
        <Heading $size={14} $weight={600}>Safety Net</Heading>
        <Donut size={132} thickness={16} top={53} />
        <ChangeButton type="button">Change Plan</ChangeButton>
      </SafetyPlanCard>
      <SafetyCard>
        <SafetyCopy>
          <Heading $weight={700}>Safety Net</Heading>
          <SafetyNote>Great job! You’re on track to reach your savings goal.</SafetyNote>
          <Heading as="h3" $size={14} $weight={700} $top={28}>Highlights</Heading>
          <HighlightList>
            <li><Flag /><p>You added $120 this month!</p></li>
            <li><Flag /><p>You added $50 <b>more</b> this month than last month!</p></li>
          </HighlightList>
        </SafetyCopy>
        <BalancePanel>
          <Heading as="h3" $size={13} $line={16} $weight={700}>Balance History</Heading>
          <AmountRow $top={24} $size={13} $gap={10} $round>
            <span>Current<b>$900</b></span>
            <span>Goal<b>$5000</b></span>
          </AmountRow>
          <ProgressLabels><span>Progress</span><span>18%</span></ProgressLabels>
          <ProgressTrack><ProgressFill style={{ width: "18%" }} /></ProgressTrack>
          <svg width="286" height="165">
            <rect width="282" height="139" fill="#f4f4f4" />
            <Area y={71} width={282} height={68} fill="#696968" />
            <MonthLabels xs={[6, 56, 105, 157, 203, 248]} y={153} size={11} color="#222" />
          </svg>
        </BalancePanel>
        <Divider $height={221} $top={64} $left={23} />
        <AdviceColumn $top={22} $right={38} $left={30}>
          <Heading $weight={700}>Grow your safety net</Heading>
          <Heading as="h3" $size={13} $line={16} $weight={700} $top={16}>Recommendations:</Heading>
          <ActionRows $top={16} $row={31} $indent={20}>
            {["Add new student", "Increase rate", "Lorem Ipsum"].map((text) => (
              <li key={text}>
                <span>{text}</span>
                <SoftButton type="button" $width={84}>Add to Tasks</SoftButton>
              </li>
            ))}
          </ActionRows>
        </AdviceColumn>
      </SafetyCard>
    </PaymentsBody>
  </Frame>
);

/* ---------- Music Revenue ---------- */

const MusicBody = styled.div`
  height: 100%;
  padding: 33px 35px 54px;
  border-top: 13px solid #fff;
`;

const MusicCard = styled(RaisedCard)`
  display: grid;
  grid-template-columns: 402px 1fr;
  column-gap: 86px;
  margin-top: 34px;
  padding: 22px 52px 38px 50px;
`;

const LegendRow = styled.div`
  display: flex;
  justify-content: space-between;
  align-items: center;
  margin: 26px 0 36px;
  ${HelpButton} { margin-bottom: 16px; }
`;

const RevenueLegend = styled.ul`
  display: grid;
  row-gap: 10px;
  width: 204px;
  padding: 14px 0 14px 14px;
  background: #efefef;
  font-family: ${lato};
  font-size: 14px;
  line-height: 19px;
  li { display: flex; gap: 12px; white-space: nowrap; }
`;

const RevenueSwatch = styled.span`
  width: 39px;
  height: 19px;
  background: ${(p) => p.$color};
`;

const SortTitle = styled.div`
  display: flex;
  align-items: center;
  gap: 24px;
  margin-bottom: 4px;
`;

const RevenueTable = styled.table`
  width: 100%;
  border-collapse: collapse;
  font-size: 18px;
  line-height: 24px;
  tr { height: 68px; border-bottom: 2px solid #5a5a5a; }
  td { padding: 0 0 7px; vertical-align: bottom; }
  td:nth-child(1) { width: 33%; }
  td:nth-child(2) { width: 39%; text-align: center; }
  td:nth-child(3) { padding-left: 76px; }
`;

const Pill = styled.span`
  display: inline-block;
  padding: 0 ${(p) => (p.$music ? 25 : 14)}px;
  border-radius: 18px;
  background: ${(p) => (p.$music ? "#b3b2b1" : "#efefef")};
  color: #3f4553;
  line-height: 35px;
  vertical-align: bottom;
  white-space: nowrap;
`;

const revenueBars = [
  { x: 37, dark: 126, light: 148 },
  { x: 102, dark: 105, light: 133 },
  { x: 167, dark: 143, light: 165 },
  { x: 231, dark: 116, light: 140 },
  { x: 296, dark: 95, light: 121 },
  { x: 360, dark: 73, light: 96 },
];

const revenueItems = [
  [true, "$2000"],
  [true, "$1800"],
  [true, "$980"],
  [false, "$700"],
  [false, "$680"],
];

const MusicRevenue = () => (
  <Frame $width="28%" $tinted>
    <MusicBody>
      <Heading as="h1" $size={18} $line={24} $weight={700}>Music Revenue</Heading>
      <MusicCard>
        <div>
          <Heading $size={18} $line={24} $weight={700}>6-Month Overview</Heading>
          <LegendRow>
            <RevenueLegend>
              <li><RevenueSwatch $color="#b3b2b1" />Music Revenue</li>
              <li><RevenueSwatch $color="#4e4d4c" />Non-Music Revenue</li>
            </RevenueLegend>
            <Help size={19} />
          </LegendRow>
          <svg width="402" height="240">
            <rect x="37" y="0" width="365" height="206" fill="#f4f4f4" />
            {["15k", "10k", "5k", "0"].map((label, i) => (
              <ChartText key={label} x="9" y={29 + i * 55} $round $size={15} $color="#222">{label}</ChartText>
            ))}
            {revenueBars.map((bar) => (
              <g key={bar.x}>
                <rect x={bar.x} y={bar.dark} width="37" height={bar.light - bar.dark} fill="#4e4d4c" />
                <rect x={bar.x} y={bar.light} width="37" height={203 - bar.light} fill="#b3b2b1" />
              </g>
            ))}
            <rect x="37" y="206" width="365" height="1" fill="#111" />
            <polyline points="55,126 120,103 185,144 250,115 313,93 380,69" fill="none" stroke="#f78a0e" strokeWidth="4" />
            <MonthLabels xs={[37, 105, 172, 240, 305, 364]} y={228} size={14} color="#222" />
          </svg>
        </div>
        <div>
          <SortTitle>
            <Heading $size={18} $line={24} $weight={700}>Breakdown This Month</Heading>
            <svg width="20" height="13"><path d="M0 0 H20 L10 13 z" fill="#b3b2b1" /></svg>
          </SortTitle>
          <RevenueTable>
            <tbody>
              {revenueItems.map(([music, amount]) => (
                <tr key={amount}>
                  <td>Lorem Ipsum</td>
                  <td><Pill $music={music}>{music ? "Music Revenue" : "Non-Music Revenue"}</Pill></td>
                  <td>{amount}</td>
                </tr>
              ))}
            </tbody>
          </RevenueTable>
        </div>
      </MusicCard>
    </MusicBody>
  </Frame>
);

/* ---------- Available Funds ---------- */

const FundsBody = styled.div`
  height: 100%;
  padding: 46px 30px 51px 32px;
  border-right: 13px solid #fff;
`;

const FundsCards = styled.div`
  display: grid;
  grid-template-columns: 1fr 1fr;
  column-gap: 18px;
  align-items: start;
  margin-top: 34px;
`;

const CardTop = styled.div`
  display: flex;
  justify-content: space-between;
  padding: 0 ${(p) => p.$right}px 0 56px;
`;

const BreakdownCard = styled(RaisedCard)`
  padding: 30px 0 58px;
  > svg { margin: 24px 0 48px 84px; }
`;

const FundActions = styled.div`
  display: grid;
  grid-template-columns: 1fr 1fr;
  column-gap: 18px;
  padding: 0 41px 0 50px;
`;

const FundButton = styled.button`
  height: 57px;
  padding: 0 24px;
  background: #eee;
  font-size: 16px;
  line-height: 20px;
  font-weight: 700;
  color: #111;
`;

const SavingsCard = styled(RaisedCard)`
  margin-top: 3px;
  padding: 27px 0 64px;
`;

const SavingsBox = styled.div`
  margin: 12px 45px 0 56px;
  padding-top: 12px;
  border: 1px solid #bbb;
  > p { padding-left: 12px; font-size: 14px; line-height: 20px; }
  > svg { margin-top: 27px; }
`;

const SavingsMeter = styled.div`
  padding: 0 55px 0 70px;
`;

const SavingsTrack = styled.div`
  height: 16px;
  margin-top: 9px;
  background: #111;
`;

const SavingsFill = styled.div`
  height: 100%;
  background: #d9d9d9;
`;

const AvailableFunds = () => (
  <Frame $width="28.3%" $tinted>
    <FundsBody>
      <Heading as="h1" $size={18} $line={24} $weight={700}>Available Funds</Heading>
      <FundsCards>
        <BreakdownCard>
          <CardTop $right={34}>
            <Heading $size={18} $line={24} $weight={700}>Spending Breakdown This Month</Heading>
            <Help size={20} />
          </CardTop>
          <svg width="370" height="220">
            <circle cx="180" cy="103" r="65" fill="none" stroke="#a3a3a3" strokeWidth="18" />
            <g stroke="#222" strokeWidth="1.3">
              <path d="M135 41 L145 56" />
              <path d="M209 35 L204 51" />
              <path d="M230 130 L245 139" />
              <path d="M138 144 L128 157" />
              <path d="M195 32 L254 19" />
              <path d="M257 100 H297" />
              <path d="M59 100 H102" />
              <path d="M200 173 L211 198" />
            </g>
            <ChartText x="178" y="94" textAnchor="middle" $round $size={31} $color="#111">$2876</ChartText>
            <ChartText x="181" y="120" textAnchor="middle" $round $size={12} $color="#5fbf5c">+100 this week</ChartText>
            <ChartText x="259" y="15" $size={13} $weight={700} $color="#111">Available Funds</ChartText>
            <ChartText x="9" y="100" $round $size={12} $color="#222">Content</ChartText>
            <ChartText x="301" y="100" $round $size={12} $color="#222">Recording</ChartText>
            <ChartText x="193" y="207" $round $size={12} $color="#222">Marketing</ChartText>
          </svg>
          <FundActions>
            <FundButton type="button">Add available funds<br />to Safety Net</FundButton>
            <FundButton type="button">Complete a task<br />w/ available funds</FundButton>
          </FundActions>
        </BreakdownCard>
        <SavingsCard>
          <CardTop $right={30}>
            <Heading $size={18} $line={24} $weight={700}>Safety Net</Heading>
            <Help size={20} />
          </CardTop>
          <SavingsBox>
            <p>Great job! You’re on track to reach your savings goal.</p>
            <SavingsMeter>
              <AmountRow $top={20} $size={14} $weight={700} $gap={11}>
                <span>Current<b>$900</b></span>
                <span>Goal<b>$5000</b></span>
              </AmountRow>
              <SavingsTrack><SavingsFill style={{ width: "30%" }} /></SavingsTrack>
            </SavingsMeter>
            <svg width="430" height="211">
              <rect x="41" y="0" width="364" height="175" fill="#f4f4f4" />
              <Area x={41} y={79} width={364} height={96} fill="#696968" />
              {["3K", "2K", "1K"].map((label, i) => (
                <ChartText key={label} x="12" y={60 + i * 52} $round $size={15} $color="#222">{label}</ChartText>
              ))}
              <MonthLabels xs={[41, 108, 175, 244, 308, 368]} y={194} size={14} color="#222" />
            </svg>
          </SavingsBox>
        </SavingsCard>
      </FundsCards>
    </FundsBody>
  </Frame>
);

/* ---------- Fan Monetization ---------- */

const FanBody = styled.div`
  padding: 34px 51px 58px 46px;
`;

const FanCards = styled.div`
  display: grid;
  grid-template-columns: 298fr 693fr;
  column-gap: 41px;
  margin-top: 24px;
`;

const FanCard = styled.article`
  display: flex;
  flex-direction: column;
  align-items: center;
  padding: 28px 28px 58px 29px;
  background: #fff;
`;

const RevenueTile = styled.div`
  width: 100%;
  overflow: hidden;
  border: 1px solid #e4e4e4;
  border-radius: 12px;
  text-align: center;
  > svg { margin: 8px 0 0 auto; }
`;

const TileTop = styled.div`
  display: flex;
  justify-content: space-between;
  padding: 9px 8px 0;
  text-align: left;
`;

const TileTitle = styled.h2`
  font-size: 23px;
  line-height: 27px;
  font-weight: 500;
  color: #3f4553;
  text-decoration: underline;
  text-decoration-thickness: 2px;
  text-underline-offset: 3px;
`;

const TileValue = styled.div`
  margin-top: 36px;
  font-size: 31px;
  line-height: 36px;
  font-weight: 600;
  color: #f25c05;
`;

const TileTrend = styled.div`
  display: flex;
  justify-content: center;
  align-items: center;
  gap: 4px;
  margin-top: 2px;
  font-size: 16px;
  line-height: 20px;
  font-weight: 500;
  color: #15bf2d;
`;

const SuperfanButton = styled.button`
  width: 167px;
  height: 46px;
  margin-top: 67px;
  padding: 0 16px;
  border-radius: 5px;
  background: #f25d07;
  color: #fff;
  font-size: 18px;
  line-height: 20px;
  font-weight: 600;
`;

const DataCard = styled(Card)`
  padding: 26px 0 29px 28px;
`;

const DataTabs = styled.div`
  display: flex;
  height: 34px;
  margin: 13px 29px 0 28px;
  border-bottom: 2px solid #ececec;
  ${SelectBox} { margin: 0 -10px 0 auto; }
`;

const DataTab = styled.button`
  width: ${(p) => p.$width}px;
  height: 34px;
  padding-left: ${(p) => (p.$active ? 12 : 26)}px;
  border-bottom: 2px solid ${(p) => (p.$active ? "#f25c05" : "transparent")};
  color: ${(p) => (p.$active ? "#f25c05" : "#979797")};
  font-size: 15px;
  font-weight: ${(p) => (p.$active ? 600 : 400)};
  text-align: left;
`;

const DataToolbar = styled.div`
  display: flex;
  align-items: center;
  height: 25px;
  margin: 28px 28px 7px 0;
  p { margin-right: auto; font-family: ${lato}; font-size: 18px; color: #222; }
`;

const GraphToggle = styled.button`
  display: grid;
  place-items: center;
  width: 26px;
  height: 25px;
  margin-right: 22px;
  border-radius: 4px;
  background: #f4f4f4;
  box-shadow: 0 2px 2px rgba(0, 0, 0, 0.2);
`;

const DataPlot = styled.div`
  position: relative;
`;

const Tooltip = styled.div`
  position: absolute;
  left: 490px;
  top: 125px;
  width: 159px;
  height: 102px;
  padding: 15px 0 0 15px;
  border-radius: 5px;
  background: #fff;
  box-shadow: 1px 2px 3px rgba(0, 0, 0, 0.3);
  font-size: 15px;
  line-height: 28px;
  color: #777;
`;

const TooltipTitle = styled.div`
  font-size: 18px;
  line-height: 22px;
  color: #111;
`;

const TooltipLine = styled.div`
  display: flex;
  align-items: center;
  gap: 8px;
  white-space: nowrap;
`;

const TooltipTrend = styled(TooltipLine)`
  gap: 5px;
  padding-left: 5px;
  font-size: 14px;
  color: #15bf2d;
`;

const StreamSwatch = styled.span`
  width: 11px;
  height: 11px;
  background: #00cc14;
`;

const streamPlot = {
  left: 66, top: 14, base: 250, right: 587, gridRight: 566,
  rows: [29, 72, 116, 158, 202], columns: [155, 232, 309, 389, 471], columnTop: 6,
  labels: [31, 74, 117, 160, 204, 248], labelRight: 54, scaleSize: 16,
};

const FanMonetization = () => (
  <Frame $width="27.6%" $tinted>
    <FanBody>
      <PageTitle $size={23}>Fan Monetization</PageTitle>
      <FanCards>
        <FanCard>
          <RevenueTile>
            <TileTop>
              <TileTitle>Average Revenue<br />Per Fan</TileTitle>
              <Help size={19} />
            </TileTop>
            <TileValue>$16.56</TileValue>
            <TileTrend>
              +11.4%
              <svg width="13" height="13" viewBox="0 0 13 13" fill="none" stroke="#15bf2d">
                <path d="M0.5 12 L12 1 M5 1 H12 V7" />
              </svg>
            </TileTrend>
            <Area width={219} height={109} fill="#ffebcf" />
          </RevenueTile>
          <SuperfanButton type="button">Go to Superfan Builder</SuperfanButton>
        </FanCard>
        <DataCard $radius={5}>
          <Heading $size={23} $line={28}>Dive into your data</Heading>
          <DataTabs>
            <DataTab type="button" $active $width={121}>Streaming</DataTab>
            <DataTab type="button" $width={118}>Events</DataTab>
            <DataTab type="button" $width={125}>Merch</DataTab>
            <DataTab type="button" $width={125}>Subscriptions</DataTab>
            <Select label="month" width={121} height={29} size={15} indent={26} />
          </DataTabs>
          <DataToolbar>
            <p>Total Monthly Revenue</p>
            <GraphToggle type="button" aria-label="Bar graph">
              <svg width="14" height="14" fill="#00c22a">
                <rect x="0" y="5" width="3" height="9" rx="1" />
                <rect x="5" y="0" width="3" height="14" rx="1" />
                <rect x="10" y="9" width="3" height="5" rx="1" />
              </svg>
            </GraphToggle>
            <UnderlinedLink $size={18} href="#bar-graph">See bar graph</UnderlinedLink>
          </DataToolbar>
          <DataPlot>
            <svg width="620" height="286">
              <PlotGrid plot={streamPlot} />
              <PlotScale plot={streamPlot} />
              <polyline
                points="67,202 115,169 165,146 279,146 317,160 370,116 397,136 434,116 471,73"
                fill="none"
                stroke="#15c02d"
                strokeWidth="4"
              />
              <circle cx="471" cy="73" r="8" fill="#00cc14" />
              <ChartText x="66" y="271" $size={16}>Jun 1</ChartText>
              <ChartText x="448" y="271" $size={16}>Jun 30</ChartText>
            </svg>
            <Tooltip>
              <TooltipTitle>Jun 01 - Jun 30</TooltipTitle>
              <TooltipLine><StreamSwatch />38,348 streams</TooltipLine>
              <TooltipTrend>
                <svg width="18" height="13" viewBox="0 0 18 13" fill="none" stroke="#15bf2d" strokeWidth="1.4">
                  <path d="M0.5 12 L5 6.5 L8 9 L12 4 L13.5 5.5 L17 1 M12 1 H17 V6" />
                </svg>
                10%
              </TooltipTrend>
            </Tooltip>
          </DataPlot>
        </DataCard>
      </FanCards>
    </FanBody>
  </Frame>
);

export default function App() {
  return (
    <>
      <GlobalStyle />
      <Board>
        <BoardRow>
          <MyBudget />
          <MyHabits />
          <Payments />
        </BoardRow>
        <BoardRow>
          <MusicRevenue />
          <AvailableFunds />
          <FanMonetization />
        </BoardRow>
      </Board>
    </>
  );
}
